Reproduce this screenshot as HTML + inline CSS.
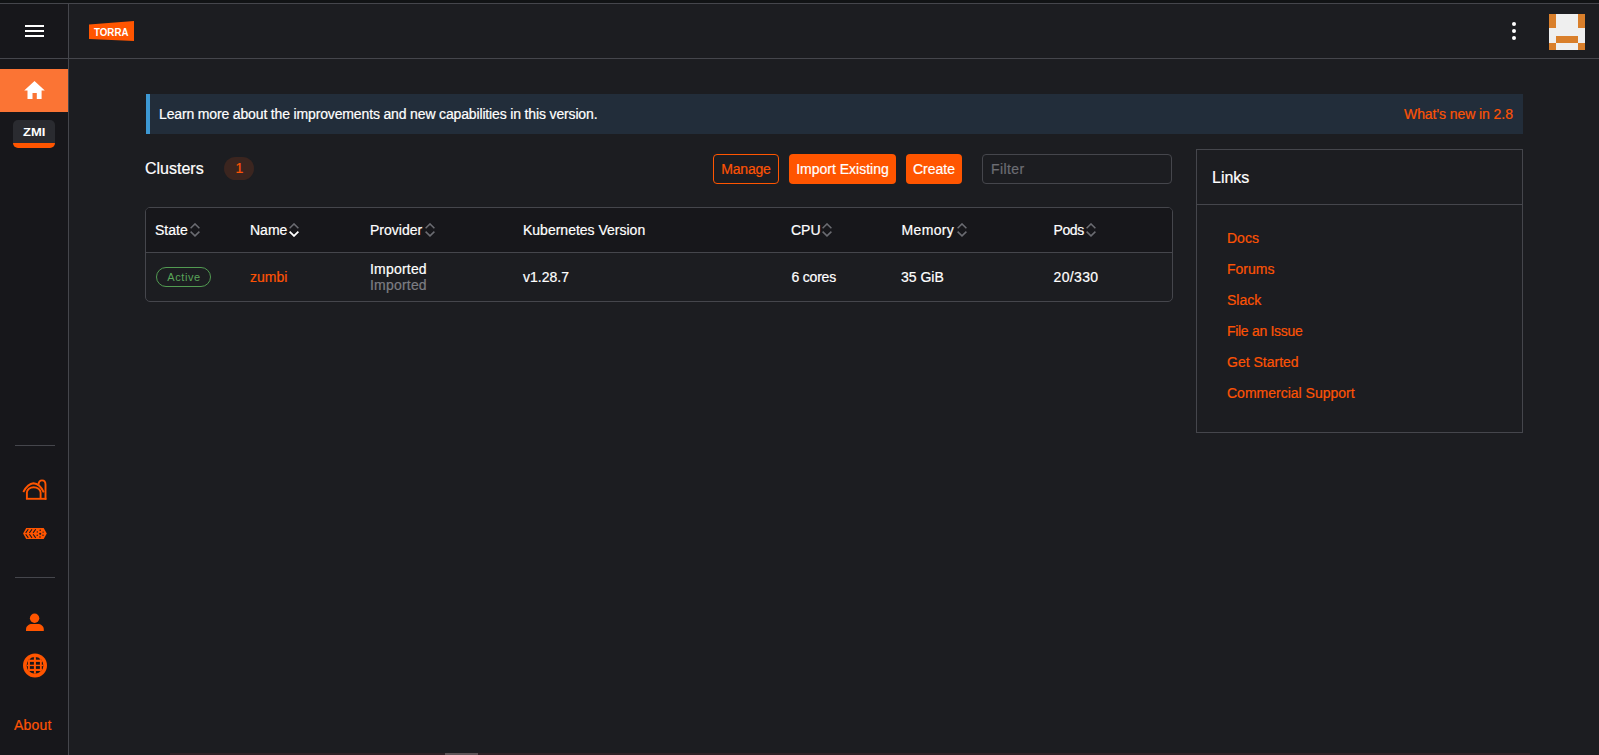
<!DOCTYPE html>
<html>
<head>
<meta charset="utf-8">
<style>
*{margin:0;padding:0;box-sizing:border-box}
html,body{width:1599px;height:755px;overflow:hidden;background:#1c1d21;font-family:"Liberation Sans",sans-serif;color:#fff}
.a.t14,.a.t16,.a.t12{-webkit-text-stroke:0.2px currentColor}
.a{position:absolute;white-space:nowrap}
.t14{font-size:14px;line-height:14px}
.t16{font-size:16px;line-height:16px}
.t12{font-size:12px;line-height:12px}
.or{color:#fd5305}
.gray{color:#7c7d83}
</style>
</head>
<body>
<!-- top strip -->
<div class="a" style="left:0;top:0;width:1599px;height:3px;background:#111315"></div>
<div class="a" style="left:0;top:3px;width:1599px;height:1px;background:#45464c"></div>
<!-- sidebar -->
<div class="a" style="left:0;top:4px;width:68px;height:751px;background:#17171b"></div>
<div class="a" style="left:68px;top:4px;width:1px;height:751px;background:#45464c"></div>
<div class="a" style="left:0;top:58px;width:1599px;height:1px;background:#45464c"></div>
<!-- hamburger -->
<div class="a" style="left:25px;top:25px;width:19px;height:2px;background:#fff"></div>
<div class="a" style="left:25px;top:30px;width:19px;height:2px;background:#fff"></div>
<div class="a" style="left:25px;top:35px;width:19px;height:2px;background:#fff"></div>

<!-- logo -->
<svg class="a" style="left:0;top:0" width="160" height="58">
<polygon points="89,24.4 134,21 134,41 89,39" fill="#ff5500"/>
<text x="94" y="35.8" font-family="Liberation Sans" font-weight="bold" font-size="11" fill="#fff" textLength="34.5" lengthAdjust="spacingAndGlyphs">TORRA</text>
</svg>

<!-- home active -->
<div class="a" style="left:0;top:69px;width:68px;height:43px;background:#fb7434"></div>
<svg class="a" style="left:24px;top:80px" width="21" height="20" viewBox="0 0 21 20">
<path d="M10.5 1 L20.8 10.5 L17.6 10.5 L17.6 19 L12.8 19 L12.8 13 L8.5 13 L8.5 19 L3.5 19 L3.5 10.5 L0.2 10.5 Z" fill="#fff"/>
</svg>

<!-- ZMI badge -->
<div class="a" style="left:13px;top:120px;width:42px;height:28px;background:#2a2b30;border-bottom:5px solid #ff5500;border-radius:5px"></div>
<svg class="a" style="left:13px;top:120px" width="42" height="23"><text x="10" y="16" font-family="Liberation Sans" font-weight="bold" font-size="11.2" fill="#fff" textLength="22.4" lengthAdjust="spacingAndGlyphs">ZMI</text></svg>

<!-- dividers -->
<div class="a" style="left:15px;top:445px;width:40px;height:1px;background:#45464c"></div>
<div class="a" style="left:15px;top:577px;width:40px;height:1px;background:#45464c"></div>

<!-- barn icon -->
<svg class="a" style="left:20px;top:476px" width="30" height="28" viewBox="0 0 30 28">
<g fill="none" stroke="#ff5500" stroke-width="1.9" stroke-linecap="butt">
<path d="M3.3 16 C5.5 12 9 7.6 13.5 7.3 C18 7.6 21.5 11.5 23.8 16.3"/>
<path d="M6.9 23 V16.5 C6.9 13.5 10 11.2 13.7 11.2 C17.4 11.2 20.6 13.5 20.6 16.5 V23"/>
<path d="M5.95 22.8 H26.4"/>
<path d="M18.4 8.6 C18.8 5.6 20.3 4.4 22 4.4 C23.9 4.4 25.5 6 25.5 8.6 V23.7"/>
</g>
</svg>

<!-- fleet icon -->
<svg class="a" style="left:20px;top:524px" width="30" height="20" viewBox="0 0 30 20">
<polygon points="3.1,9.6 6.2,4.1 23.7,4.1 26.8,9.6 23.7,15.1 6.2,15.1" fill="#ff5500"/>
<g stroke="#17171b" stroke-width="1.05" fill="none">
<path d="M5.7 8.9 L8.3 5.3 M5.7 10.3 L8.3 13.9"/>
<path d="M9.4 8.9 L12 5.3 M9.4 10.3 L12 13.9"/>
<path d="M13.1 8.9 L15.7 5.3 M13.1 10.3 L15.7 13.9"/>
</g>
<g fill="#17171b">
<circle cx="20.2" cy="9.7" r="1.05"/>
<circle cx="20.2" cy="6.3" r="0.75"/><circle cx="23.1" cy="8.1" r="0.7"/><circle cx="23" cy="11.3" r="0.7"/>
<circle cx="20" cy="13.1" r="0.75"/><circle cx="17.2" cy="11.3" r="0.7"/><circle cx="17.3" cy="7.9" r="0.7"/>
</g>
</svg>

<!-- person icon -->
<svg class="a" style="left:20px;top:606px" width="30" height="30" viewBox="0 0 30 30">
<circle cx="14.6" cy="12.3" r="4.7" fill="#ff5500"/>
<path d="M6 25 L6 23.5 C6 20 9 18.1 12 18.1 L17.8 18.1 C20.8 18.1 23.8 20 23.8 23.5 L23.8 25 Z" fill="#ff5500"/>
</svg>

<!-- globe icon -->
<svg class="a" style="left:20px;top:650px" width="30" height="30" viewBox="0 0 30 30">
<defs><clipPath id="gc"><circle cx="15" cy="15.4" r="8.4"/></clipPath></defs>
<circle cx="15" cy="15.4" r="12" fill="#ff5500"/>
<circle cx="15" cy="15.4" r="8.4" fill="#17171b"/>
<g clip-path="url(#gc)" fill="#ff5500">
<rect x="7.9" y="0" width="2" height="30"/>
<rect x="13.9" y="0" width="2" height="30"/>
<rect x="19.9" y="0" width="1.9" height="30"/>
<rect x="0" y="9.7" width="30" height="2.2"/>
<rect x="0" y="14.7" width="30" height="1.4"/>
<rect x="0" y="18.9" width="30" height="2.1"/>
</g>
</svg>

<div class="a t14 or" style="left:14px;top:718.2px;letter-spacing:0.2px">About</div>

<!-- header right -->
<div class="a" style="left:1512px;top:22px;width:4px;height:4px;border-radius:50%;background:#fff"></div>
<div class="a" style="left:1512px;top:29px;width:4px;height:4px;border-radius:50%;background:#fff"></div>
<div class="a" style="left:1512px;top:35.5px;width:4px;height:4px;border-radius:50%;background:#fff"></div>

<svg class="a" style="left:1549px;top:14px" width="36" height="36" viewBox="0 0 5 5" shape-rendering="crispEdges">
<rect width="5" height="5" fill="#efefef"/>
<rect x="0" y="0" width="1" height="2" fill="#d97f2b"/>
<rect x="4" y="0" width="1" height="2" fill="#d97f2b"/>
<rect x="1" y="3" width="3" height="1" fill="#d97f2b"/>
<rect x="0" y="4" width="1" height="1" fill="#d97f2b"/>
<rect x="4" y="4" width="1" height="1" fill="#d97f2b"/>
</svg>

<!-- banner -->
<div class="a" style="left:146px;top:94px;width:1377px;height:40px;background:#222d3a;border-left:4px solid #3d98d3"></div>
<div class="a t14" style="left:159px;top:107.4px;letter-spacing:-0.15px">Learn more about the improvements and new capabilities in this version.</div>
<div class="a t14 or" style="left:1404px;top:107.2px;letter-spacing:-0.07px">What's new in 2.8</div>

<!-- clusters heading -->
<div class="a t16" style="left:145px;top:160.5px">Clusters</div>
<div class="a" style="left:224px;top:157px;width:30px;height:23px;border-radius:12px;background:#3b251f"></div>
<div class="a t14 or" style="left:224.5px;top:161.3px;width:30px;text-align:center">1</div>

<!-- buttons -->
<div class="a" style="left:713px;top:154px;width:66px;height:30px;border:1px solid #ff5500;border-radius:4px"></div>
<div class="a t14 or" style="left:713px;top:162.2px;width:66px;text-align:center;letter-spacing:-0.2px">Manage</div>
<div class="a" style="left:789px;top:154px;width:107px;height:30px;background:#ff5500;border-radius:4px"></div>
<div class="a t14" style="left:789px;top:162.2px;width:107px;text-align:center">Import Existing</div>
<div class="a" style="left:906px;top:154px;width:56px;height:30px;background:#ff5500;border-radius:4px"></div>
<div class="a t14" style="left:906px;top:162.2px;width:56px;text-align:center">Create</div>
<div class="a" style="left:982px;top:154px;width:190px;height:30px;border:1px solid #45464c;border-radius:4px"></div>
<div class="a t14" style="left:991px;top:162.2px;color:#6c6d73;letter-spacing:0.4px">Filter</div>

<!-- table -->
<div class="a" style="left:145px;top:207px;width:1028px;height:95px;border:1px solid #45464c;border-radius:5px;overflow:hidden">
  <div style="position:absolute;left:0;top:0;width:100%;height:45px;background:#17171b;border-bottom:1px solid #45464c"></div>
</div>
<!-- sort icon defs -->
<svg width="0" height="0" style="position:absolute">
<defs>
<g id="srt"><path d="M0.6 5.2 L5 0.9 L9.4 5.2 M0.6 8.6 L5 12.9 L9.4 8.6" fill="none" stroke="#6b6c72" stroke-width="1.5"/></g>
<g id="srtd"><path d="M0.6 5.2 L5 0.9 L9.4 5.2" fill="none" stroke="#6b6c72" stroke-width="1.5"/><path d="M0.6 8.6 L5 12.9 L9.4 8.6" fill="none" stroke="#fff" stroke-width="1.8"/></g>
</defs>
</svg>
<div class="a t14" style="left:155px;top:223.2px">State</div>
<svg class="a" style="left:190px;top:223px" width="10" height="14"><use href="#srt"/></svg>
<div class="a t14" style="left:250px;top:223.2px">Name</div>
<svg class="a" style="left:289px;top:223px" width="10" height="14"><use href="#srtd"/></svg>
<div class="a t14" style="left:370px;top:223.2px">Provider</div>
<svg class="a" style="left:425px;top:223px" width="10" height="14"><use href="#srt"/></svg>
<div class="a t14" style="left:523px;top:223.2px">Kubernetes Version</div>
<div class="a t14" style="left:791px;top:223.2px">CPU</div>
<svg class="a" style="left:822px;top:223px" width="10" height="14"><use href="#srt"/></svg>
<div class="a t14" style="left:901.5px;top:223.2px;letter-spacing:0.35px">Memory</div>
<svg class="a" style="left:957px;top:223px" width="10" height="14"><use href="#srt"/></svg>
<div class="a t14" style="left:1053.5px;top:223.2px;letter-spacing:-0.4px">Pods</div>
<svg class="a" style="left:1086px;top:223px" width="10" height="14"><use href="#srt"/></svg>

<div class="a" style="left:156px;top:267px;width:55px;height:20px;border:1px solid #529b52;border-radius:10px"></div>
<div class="a t12" style="left:156.5px;top:271.5px;width:55px;text-align:center;color:#5aa55a;font-size:11px;line-height:11px;letter-spacing:0.55px;-webkit-text-stroke:0">Active</div>
<div class="a t14 or" style="left:250px;top:269.8px">zumbi</div>
<div class="a t14" style="left:370px;top:262px;letter-spacing:0.2px">Imported</div>
<div class="a t14 gray" style="left:370px;top:277.9px;letter-spacing:0.2px">Imported</div>
<div class="a t14" style="left:523px;top:269.8px">v1.28.7</div>
<div class="a t14" style="left:791.5px;top:270px;letter-spacing:-0.2px">6 cores</div>
<div class="a t14" style="left:901px;top:270px">35 GiB</div>
<div class="a t14" style="left:1053.5px;top:270px;letter-spacing:0.35px">20/330</div>

<!-- links panel -->
<div class="a" style="left:1196px;top:149px;width:327px;height:284px;border:1px solid #45464c"></div>
<div class="a" style="left:1196px;top:204px;width:327px;height:1px;background:#45464c"></div>
<div class="a t16" style="left:1212px;top:169.5px">Links</div>
<div class="a t14 or" style="left:1227px;top:231.2px">Docs</div>
<div class="a t14 or" style="left:1227px;top:262.2px">Forums</div>
<div class="a t14 or" style="left:1227px;top:293.2px">Slack</div>
<div class="a t14 or" style="left:1227px;top:324.2px;letter-spacing:-0.3px">File an Issue</div>
<div class="a t14 or" style="left:1227px;top:355.2px">Get Started</div>
<div class="a t14 or" style="left:1227px;top:386.2px">Commercial Support</div>
<div class="a" style="left:170px;top:753px;width:1360px;height:2px;background:#2e2126"></div>
<div class="a" style="left:445px;top:753px;width:33px;height:2px;background:#5f5458"></div>
</body>
</html>
